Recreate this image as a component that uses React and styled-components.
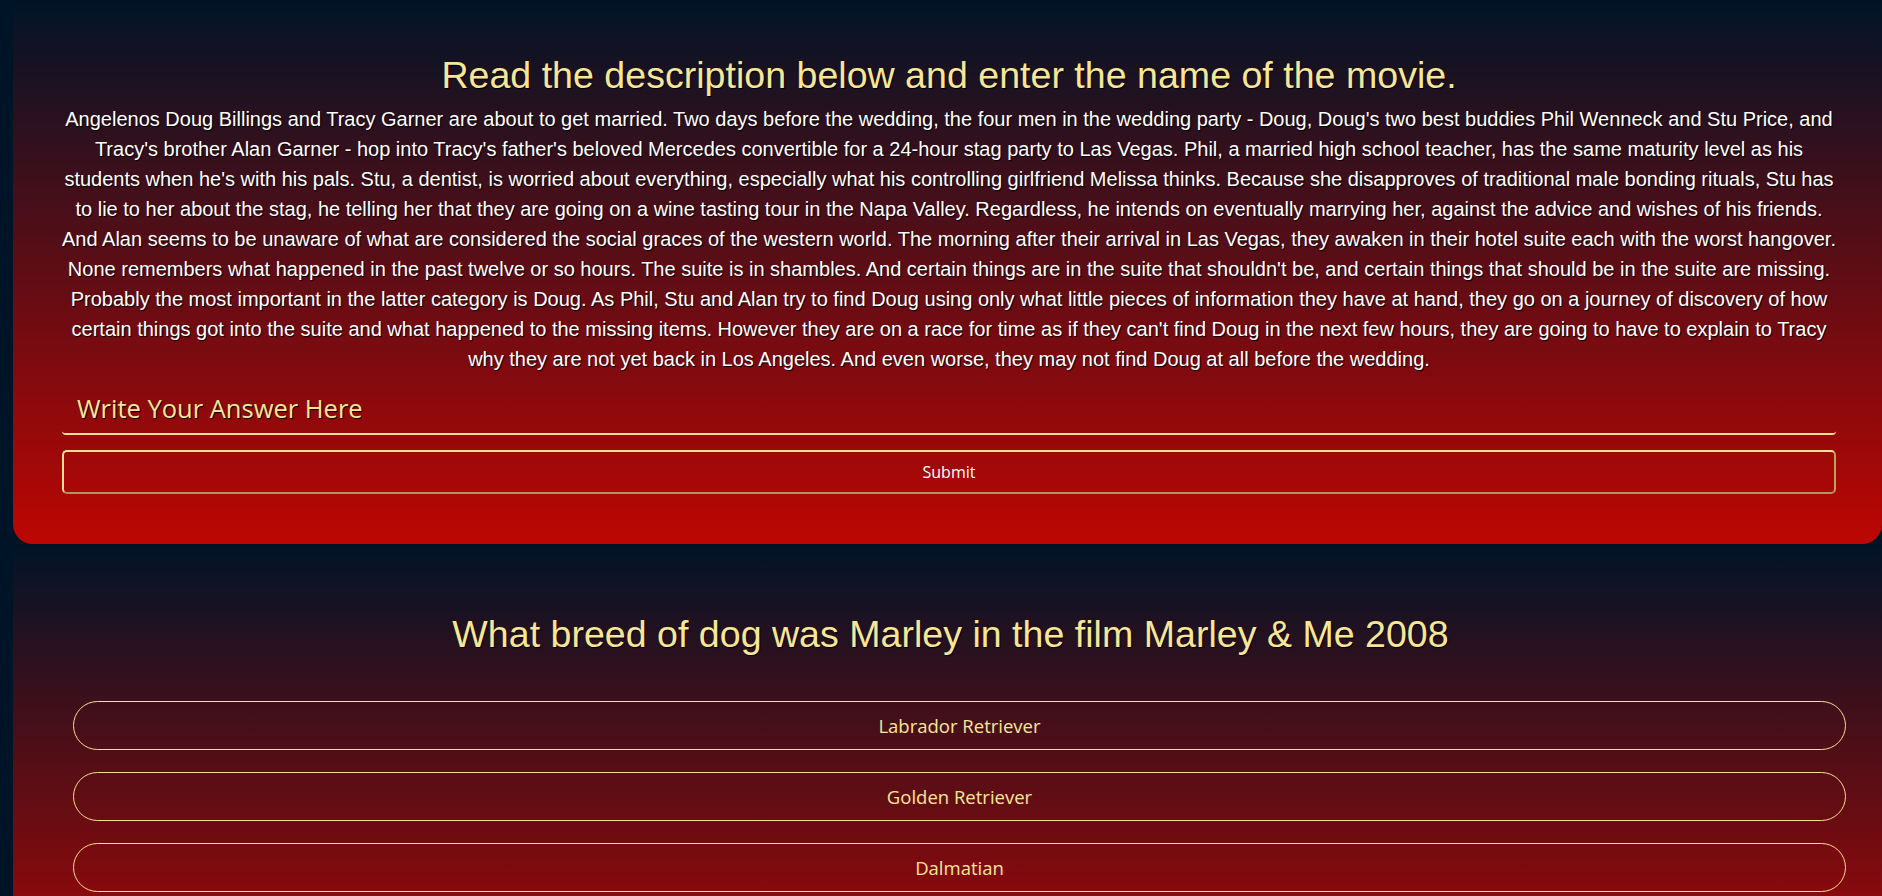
import React from "react";
import styled, { createGlobalStyle } from "styled-components";

const GlobalStyle = createGlobalStyle`
  html, body {
    margin: 0;
    padding: 0;
    background: #001427;
    overflow: hidden;
  }
  * {
    box-sizing: border-box;
  }
`;

const Page = styled.main`
  min-height: 100vh;
  padding-left: 13px;
  background: #001427;
`;

const MovieCard = styled.section`
  display: flex;
  flex-direction: column;
  align-items: stretch;
  padding: 54px 46px 50px 49px;
  border-radius: 0 0 20px 20px;
  background: linear-gradient(180deg, #001427 0%, #bd0603 100%);
`;

const Heading = styled.h1`
  margin: 0 0 7px;
  font-family: "Liberation Sans", Arial, sans-serif;
  font-weight: 400;
  font-size: 37.6px;
  line-height: 43px;
  text-align: center;
  color: #f8e697;
  text-shadow: 1px 1px 1px #000;
`;

const Description = styled.p`
  margin: 0;
  font-family: "Liberation Sans", Arial, sans-serif;
  font-size: 20px;
  line-height: 30px;
  text-align: center;
  color: #ffffff;
  text-shadow: 1px 1px 1px #000;
`;

const AnswerInput = styled.input`
  display: block;
  width: 100%;
  height: 52px;
  margin-top: 9px;
  padding: 0 15px;
  border: none;
  border-bottom: 2px solid #f6e18c;
  border-radius: 4px;
  background: transparent;
  outline: none;
  font-family: "Open Sans", "Noto Sans", sans-serif;
  font-size: 25.5px;
  color: #f8e697;

  &::placeholder {
    color: #f8e697;
    text-shadow: 1px 1px 1px #000;
    opacity: 1;
  }
`;

const SubmitButton = styled.button`
  display: block;
  width: 100%;
  height: 44px;
  margin-top: 15px;
  border: 2px solid #f6e18c;
  border-bottom-color: #a89a5c;
  border-right-color: #b5a35e;
  border-radius: 5px;
  background: transparent;
  font-family: "Open Sans", "Noto Sans", sans-serif;
  font-size: 16px;
  color: #ffffff;
  cursor: pointer;
`;

const QuizSection = styled.section`
  min-height: 490px;
  padding: 69px 36px 40px 60px;
  background: linear-gradient(180deg, #001427 0%, #bd0603 100%);
`;

const Question = styled.h2`
  margin: 0 0 45px -18px;
  font-family: "Liberation Sans", Arial, sans-serif;
  font-weight: 400;
  font-size: 37.6px;
  line-height: 43px;
  text-align: center;
  color: #f8e697;
  text-shadow: 1px 1px 1px #000;
`;

const Options = styled.div`
  display: flex;
  flex-direction: column;
  gap: 22px;
`;

const Option = styled.button`
  width: 100%;
  height: 49px;
  border: 1px solid #f5df8c;
  border-radius: 9999px;
  background: transparent;
  font-family: "Open Sans", "Noto Sans", sans-serif;
  font-size: 18.5px;
  color: #f8e697;
  cursor: pointer;
`;

const description =
  "Angelenos Doug Billings and Tracy Garner are about to get married. Two days before the wedding, the four men in the wedding party - Doug, Doug's two best buddies Phil Wenneck and Stu Price, and Tracy's brother Alan Garner - hop into Tracy's father's beloved Mercedes convertible for a 24-hour stag party to Las Vegas. Phil, a married high school teacher, has the same maturity level as his students when he's with his pals. Stu, a dentist, is worried about everything, especially what his controlling girlfriend Melissa thinks. Because she disapproves of traditional male bonding rituals, Stu has to lie to her about the stag, he telling her that they are going on a wine tasting tour in the Napa Valley. Regardless, he intends on eventually marrying her, against the advice and wishes of his friends. And Alan seems to be unaware of what are considered the social graces of the western world. The morning after their arrival in Las Vegas, they awaken in their hotel suite each with the worst hangover. None remembers what happened in the past twelve or so hours. The suite is in shambles. And certain things are in the suite that shouldn't be, and certain things that should be in the suite are missing. Probably the most important in the latter category is Doug. As Phil, Stu and Alan try to find Doug using only what little pieces of information they have at hand, they go on a journey of discovery of how certain things got into the suite and what happened to the missing items. However they are on a race for time as if they can't find Doug in the next few hours, they are going to have to explain to Tracy why they are not yet back in Los Angeles. And even worse, they may not find Doug at all before the wedding.";

const answers = ["Labrador Retriever", "Golden Retriever", "Dalmatian"];

const App = () => {
  return (
    <Page>
      <GlobalStyle />
      <MovieCard>
        <Heading>Read the description below and enter the name of the movie.</Heading>
        <Description>{description}</Description>
        <AnswerInput type="text" placeholder="Write Your Answer Here" />
        <SubmitButton type="button">Submit</SubmitButton>
      </MovieCard>
      <QuizSection>
        <Question>What breed of dog was Marley in the film Marley &amp; Me 2008</Question>
        <Options>
          {answers.map((answer) => (
            <Option key={answer} type="button">
              {answer}
            </Option>
          ))}
        </Options>
      </QuizSection>
    </Page>
  );
};

export default App;
